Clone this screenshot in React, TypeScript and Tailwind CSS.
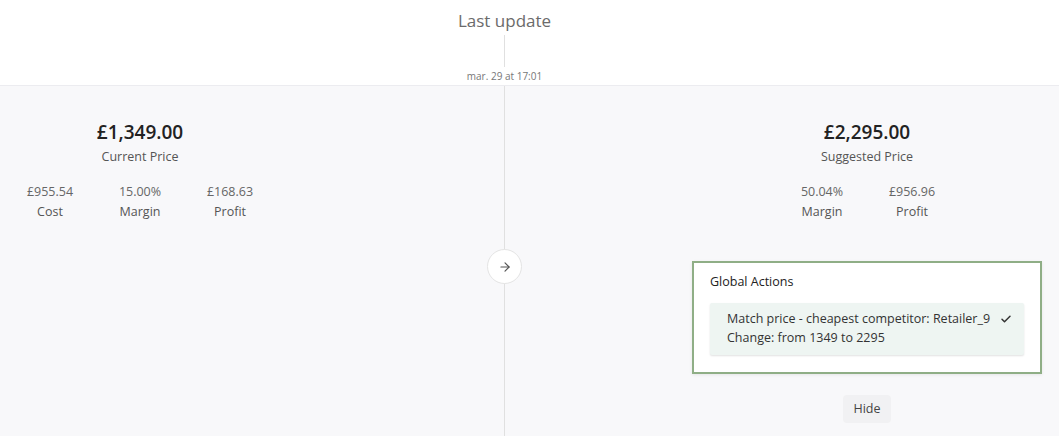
import React from "react";

const font = { fontFamily: '"Open Sans", "Liberation Sans", sans-serif' };

const Stat = ({ value, label }: { value: string; label: string }) => (
  <div className="w-[90px] flex flex-col items-center">
    <span className="text-[12.5px] leading-[20px] text-[#666]">{value}</span>
    <span className="text-[12.5px] leading-[20px] text-[#555]">{label}</span>
  </div>
);

const PriceBlock = ({
  price,
  label,
  stats,
}: {
  price: string;
  label: string;
  stats: { value: string; label: string }[];
}) => (
  <div className="flex flex-col items-center">
    <span className="text-[19px] leading-[24px] font-semibold text-[#222]">{price}</span>
    <span className="mt-[3px] text-[12.5px] leading-[19px] text-[#555]">{label}</span>
    <div className="mt-[16px] flex">
      {stats.map((s) => (
        <Stat key={s.label} value={s.value} label={s.label} />
      ))}
    </div>
  </div>
);

export default function App() {
  return (
    <div className="w-[1059px] h-[436px] flex flex-col overflow-hidden bg-white" style={font}>
      <div className="h-[86px] shrink-0 border-b border-[#ececf0] bg-white">
        <div className="w-[1009px] flex flex-col items-center">
          <span className="mt-[9px] text-[17px] leading-[24px] text-[#6b6b6b]">Last update</span>
          <div className="mt-[2px] w-px h-[32px] bg-[#e0e0e0]" />
          <span className="mt-[2px] text-[10px] leading-[14px] text-[#777]">mar. 29 at 17:01</span>
        </div>
      </div>
      <div className="flex-1 flex bg-[#f8f8fa]">
        <div className="w-[504px] pt-[34px] pl-[5px]">
          <div className="w-[270px]">
            <PriceBlock
              price="£1,349.00"
              label="Current Price"
              stats={[
                { value: "£955.54", label: "Cost" },
                { value: "15.00%", label: "Margin" },
                { value: "£168.63", label: "Profit" },
              ]}
            />
          </div>
        </div>
        <div className="relative w-px bg-[#e0e0e0]">
          <div className="absolute left-[-17px] top-[163px] w-[35px] h-[35px] rounded-full bg-white border border-[#e4e4e4] flex items-center justify-center">
            <svg width="14" height="14" viewBox="0 0 24 24" fill="none" stroke="#555" strokeWidth="2" strokeLinecap="round" strokeLinejoin="round">
              <path d="M5 12h14" />
              <path d="M12 5l7 7-7 7" />
            </svg>
          </div>
        </div>
        <div className="flex-1 flex justify-end pr-[17px] pt-[34px]">
          <div className="w-[350px] flex flex-col items-center">
            <PriceBlock
              price="£2,295.00"
              label="Suggested Price"
              stats={[
                { value: "50.04%", label: "Margin" },
                { value: "£956.96", label: "Profit" },
              ]}
            />
            <div className="mt-[39px] w-full border-2 border-[#8fae86] bg-white px-[16px] pt-[10px] pb-[17px] shadow-[0_1px_3px_rgba(0,0,0,0.08)]">
              <div className="text-[12.5px] leading-[18px] text-[#222]">Global Actions</div>
              <div className="mt-[12px] bg-[#eef5f2] rounded-[2px] shadow-[0_1px_2px_rgba(0,0,0,0.12)] pl-[17px] pr-[12px] pt-[6px] pb-[8px] flex items-start justify-between">
                <div className="text-[12.5px] leading-[19px] text-[#333]">
                  <div>Match price - cheapest competitor: Retailer_9</div>
                  <div>Change: from 1349 to 2295</div>
                </div>
                <svg className="mt-[4px]" width="12" height="12" viewBox="0 0 24 24" fill="none" stroke="#333" strokeWidth="3" strokeLinecap="round" strokeLinejoin="round">
                  <path d="M4 12.5l5 5L20 6.5" />
                </svg>
              </div>
            </div>
            <button className="mt-[21px] h-[28px] px-[10px] rounded-[4px] bg-[#f1f1f3] text-[12.5px] text-[#444]">
              Hide
            </button>
          </div>
        </div>
      </div>
    </div>
  );
}
